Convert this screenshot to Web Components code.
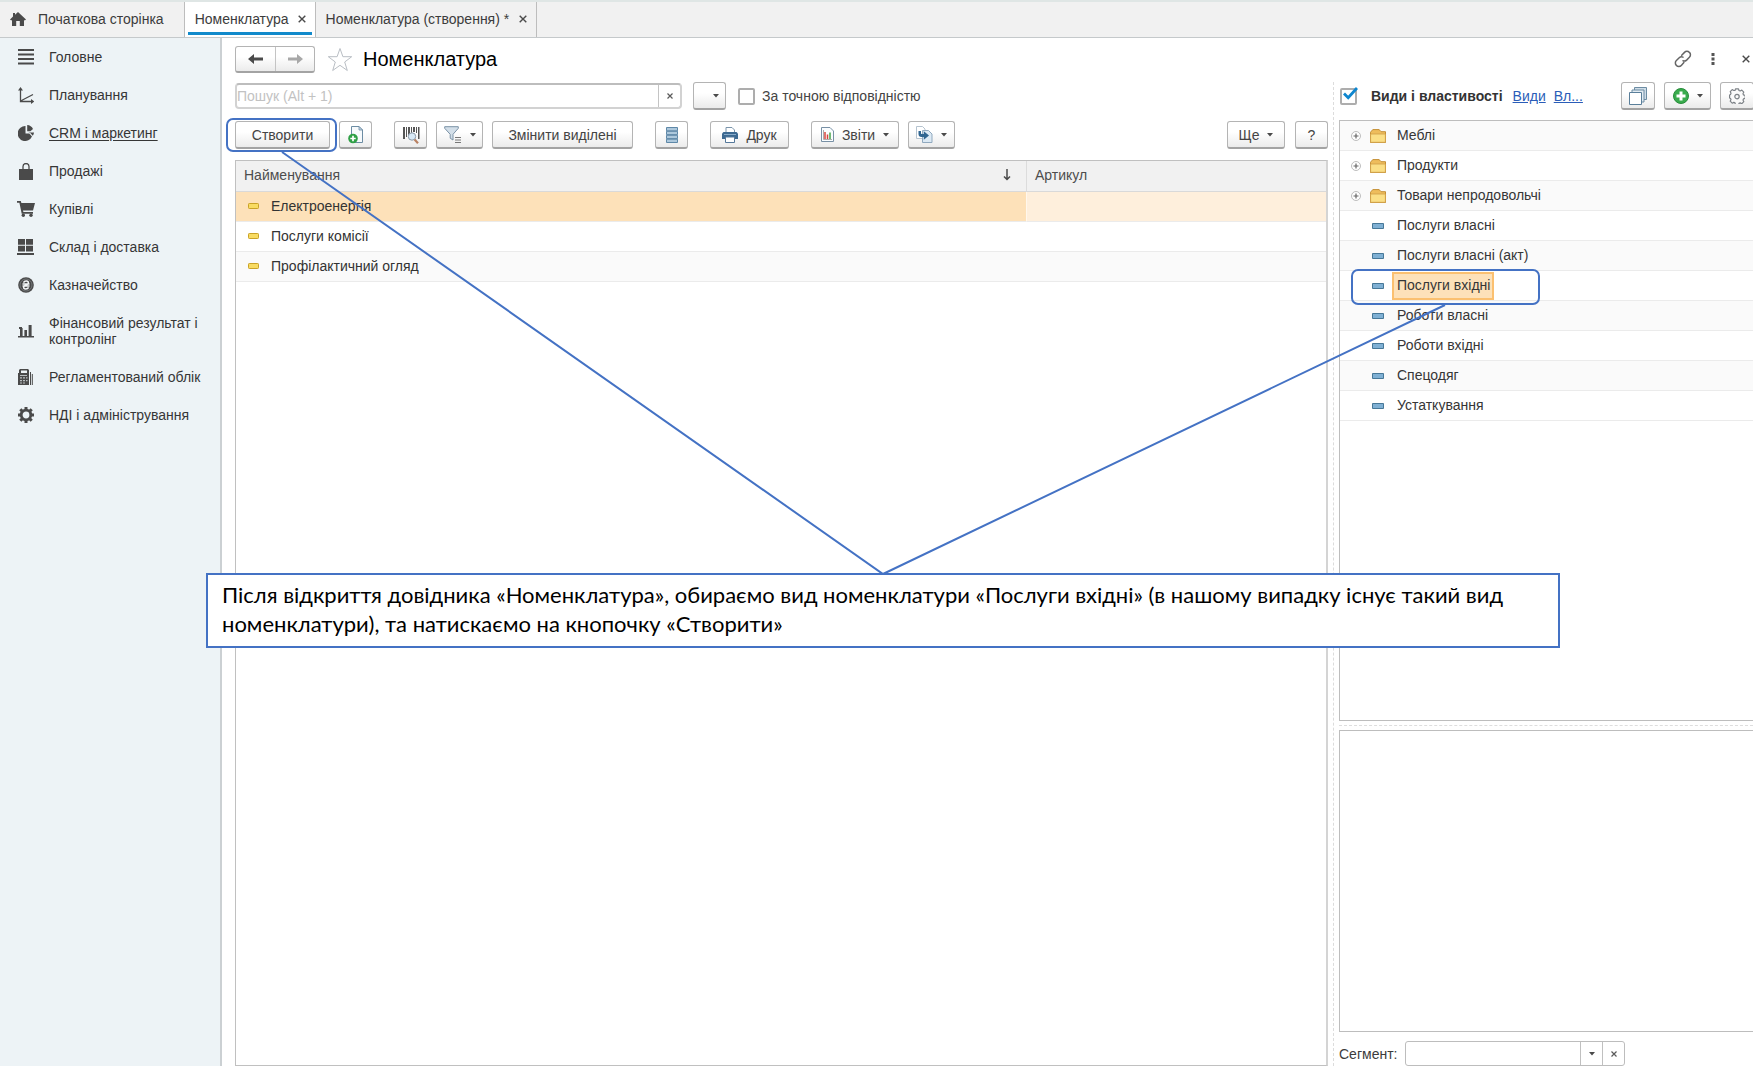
<!DOCTYPE html>
<html lang="uk">
<head>
<meta charset="utf-8">
<title>Номенклатура</title>
<style>
html, body { margin: 0; height: 100%; }
body { font: 14px/16px "Liberation Sans", Arial, sans-serif; color: #3c3c3c; background: #fff; overflow: hidden; }
</style>
</head>
<body>
<app-shell></app-shell>
<script>
const ICONS = {
  home: [16, 14, '<path fill="#4a4a4a" d="M8 0 16 7.400 14.800 8.600 14 7.900V14H9.800V9H6.200v5H2V7.900l-.8.7L0 7.400 3 4.600V1h2v1.800z"/>'],
  lines: [16, 16, '<path fill="#4a4a4a" d="M0 0h16v2H0zM0 4.500h16v2H0zM0 9h16v2H0zM0 13.500h16v2H0z"/>'],
  plan: [16, 17, '<path fill="none" stroke="#4a4a4a" stroke-width="1.300" d="M2.500 2v12.500H14M2.500 14 15 7.500"/><path fill="#4a4a4a" d="M0 3.500 2.500 0 5 3.500zM13 12l3.500 2.500L13 17z"/>'],
  pie: [16, 16, '<path fill="#4a4a4a" d="M7.500 1v7.500h3.800l2.700 3A7.500 7.500 0 1 1 7.500 1z"/><path fill="#4a4a4a" d="M9.200 0v6.200h3.200L15 4A7 7 0 0 0 9.200 0zM10 7.600h6a7 7 0 0 1-1.200 3.200L12.300 8z"/>'],
  bag: [14, 17, '<path fill="#4a4a4a" d="M0 6h14v11H0z"/><path fill="none" stroke="#4a4a4a" stroke-width="1.300" d="M4 8V3.500a3 3 0 0 1 6 0V8"/>'],
  cart: [18, 16, '<path fill="#4a4a4a" d="M0 0h3.800l.6 2H18l-2 7.500H6l.4 1.500H16v1.800H4.700L2.400 1.800H0z"/><circle cx="6.300" cy="14.300" r="1.700" fill="#4a4a4a"/><circle cx="14" cy="14.300" r="1.700" fill="#4a4a4a"/>'],
  stock: [17, 16, '<path fill="#4a4a4a" d="M1 0h7v5.800H1zM9 0h7v5.800H9zM1 6.800h7v5.800H1zM9 6.800h7v5.800H9zM0 14h17v2H0z"/>'],
  coin: [16, 16, '<circle cx="8" cy="8" r="7.800" fill="#4a4a4a"/><circle cx="8" cy="8" r="6" fill="none" stroke="#8f9496" stroke-width=".6"/><path fill="none" stroke="#f4f7f8" stroke-width="1.500" d="M5.500 5.600C6.500 3.500 10.400 3.500 10.400 5.900 10.400 8 5.600 8 5.600 10.200c0 2.300 4 2.300 5 .2M4.500 7.100h7M4.500 9h7"/>'],
  bars: [16, 13, '<path fill="#4a4a4a" d="M2 3h2.600v8H2zM6.400 5h2.600v6H6.400zM10.600 0h3v11h-3zM0 11h16v1.500H0zM1 2h3v2H1z"/>'],
  calc: [15, 16, '<path fill="#4a4a4a" d="M2 0h8l1 1v15H0V4h1V1z"/><path fill="#edf3f6" d="M3 1.500h6V4H3z"/><path fill="#b9bec0" d="M2 6h7v1H2zM2 8.300h2v1.200H2zM5 8.300h2v1.200H5zM8 8.300h1.500v1.200H8zM2 11h2v1.200H2zM5 11h2v1.200H5zM8 11h1.500v1.200H8zM2 13.500h2v1H2zM5 13.500h2v1H5z"/><path fill="#4a4a4a" d="M12 3h1v13h-1zM13.800 5h1v11h-1z"/>'],
  gear: [16, 16, '<circle cx="8" cy="8" r="4.800" fill="none" stroke="#4a4a4a" stroke-width="2.800"/><g stroke="#4a4a4a" stroke-width="3"><path d="M8 0v2.500M8 13.500V16M0 8h2.500M13.500 8H16M2.300 2.300l1.800 1.800M11.900 11.900l1.800 1.800M2.300 13.700l1.800-1.800M11.900 4.100l1.800-1.800"/></g>'],
  back: [15, 10, '<path fill="#4a4a4a" d="M0 5 6 0v3.600h9v2.800H6V10z"/>'],
  forward: [15, 10, '<path fill="#a8a8a8" d="M15 5 9 0v3.600H0v2.800h9V10z"/>'],
  star: [26, 25, '<path fill="#fff" stroke="#b9bec4" d="m13 1.500 2.900 8.200h8.800l-7 5.300 2.600 8.500-7.300-5.200-7.300 5.200L8.300 15l-7-5.300h8.800z"/>'],
  close: [8, 8, '<path stroke="#4a4a4a" stroke-width="1.400" d="m.7.7 6.600 6.600M7.300.7.7 7.300"/>'],
  closeSmall: [6, 6, '<path stroke="#5a5a5a" stroke-width="1.200" d="m.5.5 5 5M5.500.5l-5 5"/>'],
  caret: [6, 4, '<path fill="#4a4a4a" d="M0 0h6L3 3.500z"/>'],
  copyNew: [16, 18, '<path fill="#f7fafc" stroke="#6c8ca3" d="M3.500.5H11l3.500 3.500v12.500h-11z"/><path fill="#c9dbe8" stroke="#6c8ca3" stroke-width=".8" d="M11 .5V4h3.500z"/><circle cx="5" cy="12.500" r="4.800" fill="#2fa046"/><path stroke="#fff" stroke-width="1.700" d="M5 9.800v5.400M2.300 12.500h5.400"/>'],
  barcode: [18, 18, '<path fill="#555" d="M1 1h2v12H1zM4 1h1v10H4zM6 1h2v8H6zM9 1h1v6H9zM11 1h2v5h-2zM14 1h1v6h-1zM16 1h1.500v12H16z"/><circle cx="10" cy="10.500" r="3.700" fill="#d8e9f6" stroke="#8b9aa8"/><path stroke="#b98162" stroke-width="2.200" d="m12.600 13.400 3.400 3.800"/>'],
  funnel: [18, 18, '<path fill="#d3dfe9" stroke="#7b92a6" d="M.7.700h13.600v1.600L9 8.300V14l-2.800-1.800V8.300L.7 2.300z"/><path stroke="#777" d="M11 11.500h6M11 14h6M11 16.500h6"/>'],
  list: [12, 16, '<path fill="#adc8dc" stroke="#5e88a8" d="M.5.500h11v3.300H.5zM.5 4.300h11v3.300H.5zM.5 8.300h11v3.300H.5zM.5 12.200h11v3.300H.5z"/>'],
  printer: [16, 16, '<path fill="#fff" stroke="#7a94ab" d="M4 6V.5h6L12.500 3v3"/><path fill="#3d6a92" d="M1.500 5h13L16 6.500V12H0V6.500z"/><path stroke="#88abc9" d="M2 7.500h12"/><path fill="#fff" stroke="#55789a" d="M3.500 10h9v5.500h-9z"/>'],
  report: [13, 15, '<path fill="#fafdff" stroke="#7890a5" d="M.5.500H9L12.500 4v10.500H.5z"/><path stroke="#d8453d" stroke-width="1.500" d="M4 5v7M6.500 7.500V12"/><path stroke="#46a349" stroke-width="1.500" d="M9 5.500V12"/><path stroke="#999" stroke-width=".8" d="M2.500 3v9.500H11"/>'],
  transfer: [17, 17, '<path fill="#fff" stroke="#b5c3cf" d="M.5.500h6L9 3v9.500H.5z"/><path fill="#dce9f4" stroke="#90a9bf" d="M6.500 4.500h6L16 8v8.500H6.500z"/><path fill="#2f6591" d="M2.500 5v3c0 2 1 3 3 3h2.300v2.800L13 9.500 7.800 5.200V8H6C5.200 8 5 7.600 5 7V5z"/>'],
  sort: [8, 12, '<path fill="none" stroke="#4a4a4a" stroke-width="1.500" d="M4 0v10M1 7.500l3 3 3-3"/>'],
  link: [18, 18, '<g fill="none" stroke="#666" stroke-width="1.500" stroke-linecap="round"><path d="M7.700 5.200 10.500 2.400a3.400 3.400 0 0 1 4.900 0 3.400 3.400 0 0 1 0 4.900l-2.800 2.800a3.400 3.400 0 0 1-3.600.7M9.900 12.600 7.300 15.400a3.400 3.400 0 0 1-4.900 0 3.400 3.400 0 0 1 0-4.900l2.800-2.800a3.400 3.400 0 0 1 3.800-.6"/></g>'],
  dots: [4, 12, '<path fill="#555" d="M.5 0h3v3h-3zM.5 4.500h3v3h-3zM.5 9h3v3h-3z"/>'],
  windows: [18, 18, '<path fill="#cfdde8" stroke="#6c8ca3" d="M5.500.5h12v12h-12z"/><path fill="#e3ecf3" stroke="#6c8ca3" d="M3 3h12v12H3z"/><path fill="#fff" stroke="#5a7f9a" d="M.5 5.500h12v12H.5z"/>'],
  add: [16, 16, '<circle cx="8" cy="8" r="7.500" fill="#39ab4d" stroke="#278c3a"/><path stroke="#fff" stroke-width="3" d="M8 3.500v9M3.500 8h9"/>'],
  cog: [16, 16, '<path fill="#fafafa" stroke="#7d8287" stroke-width="1.200" stroke-linejoin="round" d="M6.500.8h3l.5 1.700 1.200.5 1.600-.9 2 2-.8 1.700.5 1.100 1.700.5v3l-1.700.5-.5 1.200.8 1.600-2 2-1.600-.8-1.200.5-.5 1.700h-3L6 14.900l-1.200-.5-1.600.8-2-2 .8-1.600-.5-1.200-.9-.5v-3l.9-.5.5-1.100-.8-1.700 2-2 1.600.9L6 2.500z"/><circle cx="8" cy="8.600" r="2.200" fill="none" stroke="#7d8287" stroke-width="1.200"/>'],
  plus: [10, 10, '<circle cx="5" cy="5" r="4.500" fill="#fff" stroke="#b5b5b5" stroke-width=".9"/><path stroke="#666" stroke-width="1.200" d="M5 2.500v5M2.500 5h5"/>'],
  folder: [16, 14, '<path fill="#eebd5c" stroke="#c48f35" d="M.5 13.500V3.200L2.800.6h6.400L11 2.700h4.500v10.800z"/><path fill="#fbdf86" stroke="#cf9d48" stroke-width=".8" d="M.6 5h14.800v8.300H.6z"/>'],
  dashBlue: [12, 6, '<path fill="#7fb0d4" stroke="#477898" d="M.5.500h11v5H.5z"/>'],
  dashGold: [11, 6, '<rect x=".5" y=".5" width="10" height="5" rx=".8" fill="#f8db62" stroke="#c9a227"/>'],
  tick: [15, 13, '<path fill="none" stroke="#0e86cf" stroke-width="2.800" d="m1 6.500 4.200 4.300L14 1"/>']
};

function define(name, css, html) {
  customElements.define(name, class extends HTMLElement {
    constructor() {
      super();
      this.attachShadow({ mode: 'open' });
    }
    connectedCallback() {
      const body = typeof html === 'function' ? html(this) : html;
      this.shadowRoot.innerHTML = `<style>*{box-sizing:border-box}button,input{font:inherit;color:inherit;margin:0}${css}</style>${body}`;
    }
  });
}

define('ui-icon', ':host{display:inline-flex;flex:none}svg{display:block}', el => {
  const [w, h, art] = ICONS[el.getAttribute('name')];
  return `<svg width="${w}" height="${h}" viewBox="0 0 ${w} ${h}" fill="none" aria-hidden="true">${art}</svg>`;
});

define('tool-button', `
  :host{display:block;flex:none}
  button{display:flex;align-items:center;justify-content:center;gap:8px;width:100%;height:28px;padding:0 6px;border:1px solid #b4b4b4;border-bottom:2px solid #a3a3a3;border-radius:3px;background:linear-gradient(#fff 40%,#ebebeb);color:#444;white-space:nowrap}
  :host([blank]) button{justify-content:flex-end}
`, el => `<button type="button" aria-label="${el.getAttribute('label') || el.textContent.trim()}">
  ${el.hasAttribute('icon') ? `<ui-icon name="${el.getAttribute('icon')}"></ui-icon>` : ''}<slot></slot>${el.hasAttribute('menu') ? '<ui-icon name="caret"></ui-icon>' : ''}</button>`);

define('check-field', `
  :host{display:block}
  label{display:flex;align-items:center;gap:7px}
  .box{display:grid;width:17px;height:17px}
  input{grid-area:1/1;appearance:none;width:17px;height:17px;border:2px solid #adadad;border-radius:2px;background:#fff}
  ui-icon{grid-area:1/1;align-self:start;justify-self:end;margin:-1px -1px 0 0;pointer-events:none}
  :host([strong]) label{font-weight:bold;gap:14px;color:#333}
`, el => `<label><span class="box"><input type="checkbox" ${el.hasAttribute('checked') ? 'checked' : ''}>${el.hasAttribute('checked') ? '<ui-icon name="tick"></ui-icon>' : ''}</span><slot></slot></label>`);

define('app-tab', `
  :host{display:flex;border-right:1px solid #bdbdbd}
  button{display:flex;align-items:center;gap:10px;border:0;background:none;padding:0 9px 2px 10px;white-space:nowrap}
  :host([home]) button{gap:12px;padding:0 20px 2px 10px}
  :host([active]) button{gap:9px;background:#fff;position:relative}
  :host([active]) button::after{content:"";position:absolute;left:3px;right:3px;bottom:2px;height:3px;background:#118acb}
`, el => `<button type="button" role="tab">${el.hasAttribute('home') ? '<ui-icon name="home"></ui-icon>' : ''}<slot></slot>${el.hasAttribute('home') ? '' : '<ui-icon name="close"></ui-icon>'}</button>`);

define('tab-bar', `
  :host{display:flex;height:38px;flex:none;background:#f1f1f1;border-top:2px solid #dfe6e5;border-bottom:1px solid #c5c9cb}
`, `<app-tab home>Початкова сторінка</app-tab><app-tab active>Номенклатура</app-tab><app-tab>Номенклатура (створення) *</app-tab>`);

define('nav-item', `
  :host{display:block}
  a{display:grid;grid-template-columns:47px 1fr;align-items:center;padding:11px 12px 11px 2px;color:#363636;text-decoration:none}
  ui-icon{justify-self:center;align-items:center;height:16px}
  :host([current]) a{text-decoration:underline;text-underline-offset:2px}
`, el => `<a href="#"><ui-icon name="${el.getAttribute('icon')}"></ui-icon><slot></slot></a>`);

define('side-nav', `
  :host{display:block;flex:none;width:222px;background:#edf3f6;border-right:2px solid #cbd0d3}
`, `<nav>
  <nav-item icon="lines">Головне</nav-item>
  <nav-item icon="plan">Планування</nav-item>
  <nav-item icon="pie" current>CRM і маркетинг</nav-item>
  <nav-item icon="bag">Продажі</nav-item>
  <nav-item icon="cart">Купівлі</nav-item>
  <nav-item icon="stock">Склад і доставка</nav-item>
  <nav-item icon="coin">Казначейство</nav-item>
  <nav-item icon="bars">Фінансовий результат і контролінг</nav-item>
  <nav-item icon="calc">Регламентований облік</nav-item>
  <nav-item icon="gear">НДІ і адміністрування</nav-item>
</nav>`);

define('page-head', `
  :host{display:flex;align-items:center;height:28px}
  .history{display:flex;height:27px;border:1px solid #b4b4b4;border-bottom:2px solid #a3a3a3;border-radius:3px;background:linear-gradient(#fff 40%,#ebebeb)}
  .history button{display:flex;align-items:center;justify-content:center;width:39px;border:0;background:none;padding:0}
  .history button+button{border-left:1px solid #c4c4c4}
  .plain{display:flex;border:0;background:none;padding:0}
  .star{margin:0 10px 0 12px}
  h1{margin:0;font-weight:normal;font-size:20px;line-height:24px;color:#000;flex:1}
  .tools{display:flex;align-items:center;gap:19px;margin-right:3px}
  .tools .plain:last-child{margin-left:8px}
`, `<div class="history"><button type="button" aria-label="Назад"><ui-icon name="back"></ui-icon></button><button type="button" aria-label="Вперед"><ui-icon name="forward"></ui-icon></button></div>
<button type="button" class="plain star" aria-label="Обране"><ui-icon name="star"></ui-icon></button>
<h1>Номенклатура</h1>
<div class="tools"><button type="button" class="plain" aria-label="Посилання"><ui-icon name="link"></ui-icon></button><button type="button" class="plain" aria-label="Меню"><ui-icon name="dots"></ui-icon></button><button type="button" class="plain" aria-label="Закрити"><ui-icon name="close"></ui-icon></button></div>`);

define('search-row', `
  :host{display:flex;align-items:center;height:28px}
  .field{display:flex;width:447px;height:26px;border:2px solid #d2d2d2;border-top-color:#bdbdbd;border-radius:4px;margin-right:11px}
  input{flex:1;min-width:0;border:0;padding:0;outline:0;background:none}
  input::placeholder{color:#c2c2c2;opacity:1}
  .field button{display:flex;align-items:center;justify-content:center;width:22px;padding:0;border:0;border-left:1px solid #c4c4c4;background:none}
  tool-button{width:33px;margin-right:12px}
  check-field{color:#444}
`, `<div class="field"><input type="text" placeholder="Пошук (Alt + 1)" aria-label="Пошук"><button type="button" aria-label="Очистити"><ui-icon name="closeSmall"></ui-icon></button></div>
<tool-button blank menu label="Історія пошуку"></tool-button><check-field>За точною відповідністю</check-field>`);

define('tool-bar', `
  :host{display:flex;margin:11px 0}
  .group{display:flex;gap:9px;margin-right:22px}
  .end{display:flex;gap:10px;margin-left:auto}
  .icon{width:33px}.wide{width:47px}
`, `<div class="group"><tool-button style="width:95px">Створити</tool-button><tool-button class="icon" icon="copyNew" label="Скопіювати"></tool-button></div>
<div class="group"><tool-button class="icon" icon="barcode" label="Пошук за штрихкодом"></tool-button><tool-button class="wide" icon="funnel" menu label="Відбір"></tool-button><tool-button style="width:141px">Змінити виділені</tool-button></div>
<div class="group"><tool-button class="icon" icon="list" label="Список"></tool-button></div>
<div class="group"><tool-button style="width:79px" icon="printer">Друк</tool-button></div>
<div class="group"><tool-button style="width:88px" icon="report" menu>Звіти</tool-button><tool-button class="wide" icon="transfer" menu label="Передати"></tool-button></div>
<div class="end"><tool-button style="width:58px" menu>Ще</tool-button><tool-button class="icon" style="color:#000">?</tool-button></div>`);

define('data-grid', `
  :host{display:block;flex:1;border:1px solid #c0c0c0;border-right:2px solid #d4d4d4;background:#fff}
  table{width:100%;border-collapse:separate;border-spacing:0;table-layout:fixed}
  th,td{height:30px;padding:0 9px 2px 8px;text-align:left;font-weight:normal;border-bottom:1px solid #ebebeb}
  th{height:31px;background:#f1f1f1;color:#4d4d4d;border-color:#d9d9d9}
  th+th{border-left:1px solid #dcdcdc}
  td{color:#333}
  .sort{display:flex;justify-content:space-between;align-items:center;padding-right:6px}
  .name{display:flex;align-items:center;gap:12px;padding-left:4px}
  .sel td{background:#fde1b9}
  .sel td+td{background:#feefdc;border-left:1px solid #fff7ec}
  tr:nth-child(3) td{background:#fafafa}
`, `<table><colgroup><col><col style="width:300px"></colgroup>
<thead><tr><th><div class="sort">Найменування<ui-icon name="sort"></ui-icon></div></th><th>Артикул</th></tr></thead>
<tbody>${['Електроенергія', 'Послуги комісії', 'Профілактичний огляд'].map((t, i) => `<tr${i ? '' : ' class="sel"'}><td><div class="name"><ui-icon name="dashGold"></ui-icon><span>${t}</span></div></td><td></td></tr>`).join('')}</tbody></table>`);

define('tree-item', `
  :host{display:grid;grid-template-columns:30px 16px 1fr;align-items:center;height:30px;border-bottom:1px solid #ebebeb;color:#363636}
  .mark{padding-left:11px;display:flex}
  ui-icon{justify-self:center}
  .text{justify-self:start;margin-left:6px;padding:3px 2px 5px 3px;border:2px solid transparent}
  :host([selected]) .text{background:#fde1b9;border-color:#fbc070}
`, el => {
  const group = el.hasAttribute('group');
  return `<span class="mark">${group ? '<ui-icon name="plus"></ui-icon>' : ''}</span><ui-icon name="${group ? 'folder' : 'dashBlue'}"></ui-icon><span class="text"><slot></slot></span>`;
});

define('kind-tree', `
  :host{display:block;border:1px solid #bdbdbd;border-right:0;background:#fff}
  tree-item:nth-of-type(odd){background:#fafafa}
`, `<tree-item group>Меблі</tree-item><tree-item group>Продукти</tree-item><tree-item group>Товари непродовольчі</tree-item>
<tree-item>Послуги власні</tree-item><tree-item>Послуги власні (акт)</tree-item><tree-item selected>Послуги вхідні</tree-item>
<tree-item>Роботи власні</tree-item><tree-item>Роботи вхідні</tree-item><tree-item>Спецодяг</tree-item><tree-item>Устаткування</tree-item>`);

define('kinds-panel', `
  :host{display:flex;flex-direction:column;flex:none;width:414px}
  header{display:flex;align-items:center;height:28px;margin:0 -1px 10px 1px}
  a{color:#2a5db8;margin-left:8px}
  check-field+a{margin-left:10px}
  .end{display:flex;gap:9px;margin-left:auto}
  kind-tree{flex:2 1 0}
  hr{width:100%;margin:4px 0;border:0;border-top:1px dashed #dedede}
  .props{flex:1 1 0;border:1px solid #bdbdbd;border-right:0}
  .segment{display:flex;align-items:center;gap:8px;margin:9px 0 0}
  .field{display:flex;width:220px;height:25px;border:1px solid #bdbdbd;border-radius:3px}
  .field input{flex:1;min-width:0;border:0;padding:0 4px;background:none}
  .field button{display:flex;align-items:center;justify-content:center;width:22px;padding:0;border:0;border-left:1px solid #c0c0c0;background:none}
`, `<header><check-field strong checked>Види і властивості</check-field><a href="#">Види</a><a href="#">Вл...</a>
<div class="end"><tool-button style="width:34px" icon="windows" label="Вікна"></tool-button><tool-button style="width:47px" icon="add" menu label="Додати"></tool-button><tool-button style="width:34px" icon="cog" label="Налаштування"></tool-button></div></header>
<kind-tree></kind-tree><hr><div class="props"></div>
<div class="segment"><label for="seg">Сегмент:</label><div class="field"><input id="seg" type="text"><button type="button" aria-label="Обрати"><ui-icon name="caret"></ui-icon></button><button type="button" aria-label="Очистити"><ui-icon name="closeSmall"></ui-icon></button></div></div>`);

define('guide-note', `
  :host{position:absolute;inset:0;pointer-events:none}
  svg{position:absolute;inset:0;width:100%;height:100%}
  p{position:absolute;left:206px;top:573px;width:1354px;margin:0;padding:5px 14px 8px;border:2px solid #4472c4;background:#fff;color:#000;font:22px/29px Lato,"Open Sans",sans-serif}
`, `<svg fill="none" stroke="#4472c4" stroke-width="2" aria-hidden="true"><rect x="227" y="119" width="109" height="32" rx="6"/><rect x="1352" y="270" width="187" height="34" rx="6"/><path d="M282 152 883 574 1445 305"/></svg>
<p>Після відкриття довідника «Номенклатура», обираємо вид номенклатури «Послуги вхідні» (в нашому випадку існує такий вид номенклатури), та натискаємо на кнопочку «Створити»</p>`);

define('app-shell', `
  :host{display:flex;flex-direction:column;height:100vh;position:relative;overflow:hidden}
  .body{display:flex;flex:1;min-height:0}
  main{display:flex;flex-direction:column;flex:1;min-width:0;padding:7px 0 0 13px}
  .work{display:flex;flex:1;min-height:0;margin-top:9px}
  .list{display:flex;flex-direction:column;flex:1;min-width:0}
  .split{flex:none;width:11px;padding-left:5px}
  .split::before{content:"";display:block;height:100%;border-left:1px dashed #dcdcdc}
`, `<tab-bar></tab-bar><div class="body"><side-nav></side-nav><main><page-head></page-head>
<div class="work"><section class="list"><search-row></search-row><tool-bar></tool-bar><data-grid></data-grid></section><div class="split"></div><kinds-panel></kinds-panel></div></main></div><guide-note></guide-note>`);
</script>
</body>
</html>
